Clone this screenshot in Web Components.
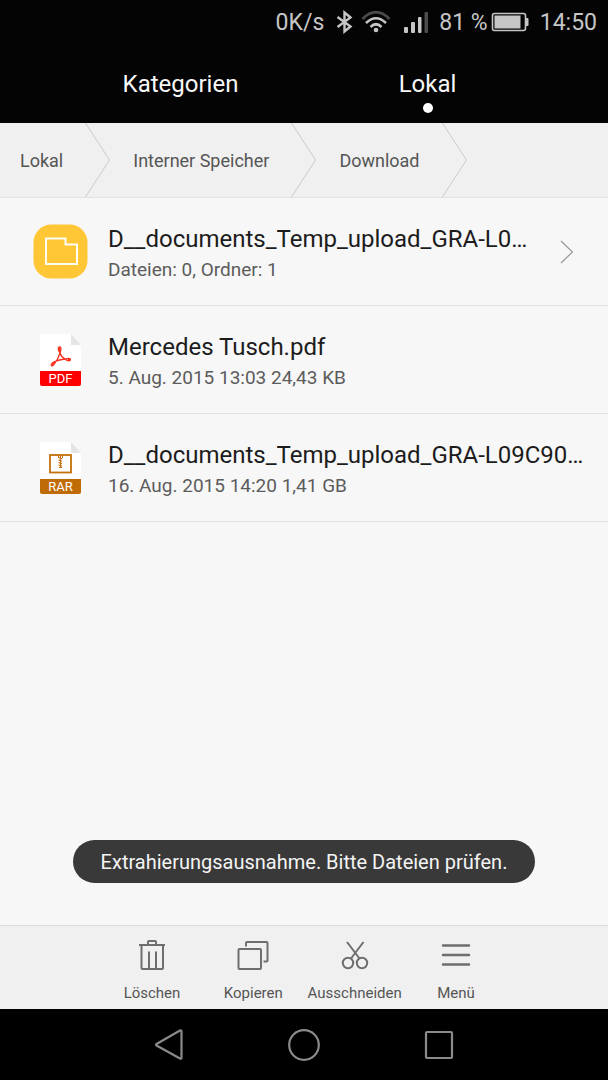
<!DOCTYPE html>
<html lang="de">
<head>
  <meta charset="UTF-8">
  <meta name="viewport" content="width=device-width, initial-scale=1">
  <title>Dateien</title>
  <style>
    body {
      margin: 0;
      background: #f7f7f7;
      font-family: Roboto, "Liberation Sans", sans-serif;
    }
  </style>
</head>
<body>
  <file-manager></file-manager>

  <script>
    class StatusBar extends HTMLElement {
      constructor() {
        super();
        this.attachShadow({ mode: "open" });
      }

      connectedCallback() {
        this.shadowRoot.innerHTML = `
          <style>
            :host {
              display: flex;
              justify-content: flex-end;
              align-items: center;
              height: 44px;
              padding-right: 11px;
              background: #040404;
              color: #c6c6c6;
              font-size: 23px;
            }

            svg {
              display: block;
              flex: none;
            }

            .bluetooth {
              margin: 0 8px 0 12px;
            }

            .signal {
              margin: 0 10px 0 12px;
            }

            .battery {
              margin: 0 10px 0 3px;
            }
          </style>
          <span>0K/s</span>
          <svg class="bluetooth" width="17" height="24" viewBox="0 0 17 24" fill="none" stroke="#c6c6c6" stroke-width="2.400">
            <path d="M1.500 7 L14.500 16.500 L8.500 21.500 V2.500 L14.500 7.500 L1.500 17"/>
          </svg>
          <svg width="30" height="24" viewBox="0 0 30 24" fill="none" stroke="#c6c6c6" stroke-width="2.600">
            <path d="M1.500 9 Q15 -4.500 28.500 9" stroke="#4c4c4c"/>
            <path d="M5 13 Q15 3.500 25 13"/>
            <path d="M9.500 17 Q15 11.500 20.500 17"/>
            <circle cx="15" cy="20" r="2.300" fill="#c6c6c6" stroke="none"/>
          </svg>
          <svg class="signal" width="26" height="24" viewBox="0 0 26 24" fill="#c6c6c6">
            <rect x="1" y="17" width="4" height="6" rx="1"/>
            <rect x="8" y="12" width="4" height="11" rx="1"/>
            <rect x="15" y="7" width="3.500" height="16" rx="1"/>
            <rect x="21.500" y="2" width="3.500" height="21" rx="1" fill="#4c4c4c"/>
          </svg>
          <span>81 %</span>
          <svg class="battery" width="39" height="20" viewBox="0 0 39 20">
            <rect x="1.500" y="1.500" width="33" height="17" rx="2" fill="none" stroke="#c6c6c6" stroke-width="1.600"/>
            <rect x="3.500" y="3.500" width="26" height="13" fill="#c6c6c6"/>
            <path d="M35 6 h1.500 q1 0 1 1 v6 q0 1 -1 1 H35 z" fill="#c6c6c6"/>
          </svg>
          <time>14:50</time>
        `;
      }
    }

    class TabBar extends HTMLElement {
      constructor() {
        super();
        this.attachShadow({ mode: "open" });
      }

      connectedCallback() {
        this.shadowRoot.innerHTML = `
          <style>
            :host {
              display: block;
              background: #040404;
            }

            nav {
              display: grid;
              grid-template-columns: 1fr 1fr;
              padding: 0 57px;
              height: 79px;
            }
          </style>
          <nav><slot></slot></nav>
        `;
      }
    }

    class TabItem extends HTMLElement {
      constructor() {
        super();
        this.attachShadow({ mode: "open" });
      }

      connectedCallback() {
        this.shadowRoot.innerHTML = `
          <style>
            :host {
              display: block;
            }

            button {
              display: flex;
              flex-direction: column;
              align-items: center;
              gap: 5px;
              width: 100%;
              height: 100%;
              padding: 26px 0 0;
              border: 0;
              background: none;
              color: #f8f8f8;
              font: inherit;
              font-size: 24px;
              line-height: 28px;
            }

            :host([active]) button::after {
              content: "";
              width: 10px;
              height: 10px;
              border-radius: 50%;
              background: #ffffff;
            }
          </style>
          <button type="button"><slot></slot></button>
        `;
      }
    }

    class BreadCrumbs extends HTMLElement {
      constructor() {
        super();
        this.attachShadow({ mode: "open" });
      }

      connectedCallback() {
        this.shadowRoot.innerHTML = `
          <style>
            :host {
              display: block;
              background: #f0f0f0;
              border-bottom: 1px solid #e2e2e2;
            }

            nav {
              display: flex;
              height: 74px;
            }
          </style>
          <nav aria-label="Pfad"><slot></slot></nav>
        `;
      }
    }

    class BreadCrumb extends HTMLElement {
      constructor() {
        super();
        this.attachShadow({ mode: "open" });
      }

      connectedCallback() {
        this.shadowRoot.innerHTML = `
          <style>
            :host {
              display: flex;
              align-items: center;
              gap: 22px;
              padding-left: 22px;
            }

            :host(:first-child) {
              padding-left: 20px;
            }

            a {
              color: #555555;
              font-size: 18px;
              text-decoration: none;
              white-space: nowrap;
            }

            svg {
              display: block;
            }
          </style>
          <a href="#"><slot></slot></a>
          <svg width="26" height="74" viewBox="0 0 26 74" fill="none" stroke="#cacaca">
            <path d="M0.500 0 L24.500 37 L0.500 74"/>
          </svg>
        `;
      }
    }

    class FileRow extends HTMLElement {
      constructor() {
        super();
        this.attachShadow({ mode: "open" });
      }

      connectedCallback() {
        const arrow = this.hasAttribute("folder")
          ? `<svg class="arrow" width="14" height="24" viewBox="0 0 14 24" fill="none" stroke="#999999" stroke-width="1.200">
              <path d="M1 1 L12.500 12 L1 23"/>
            </svg>`
          : "";

        this.shadowRoot.innerHTML = `
          <style>
            :host {
              display: block;
              border-bottom: 1px solid #e2e2e2;
            }

            a {
              display: flex;
              align-items: center;
              min-height: 107px;
              padding: 0 20px 0 33px;
              color: inherit;
              text-decoration: none;
            }

            .icon {
              display: flex;
              justify-content: center;
              flex: none;
              width: 55px;
            }

            .text {
              flex: 1;
              min-width: 0;
              margin-left: 20px;
              padding-top: 2px;
            }

            .name,
            .info {
              overflow: hidden;
              text-overflow: ellipsis;
              white-space: nowrap;
            }

            .name {
              color: #1c1c1c;
              font-size: 24px;
              line-height: 34px;
            }

            .info {
              color: #5c5c5c;
              font-size: 19px;
              line-height: 28px;
            }

            .arrow {
              flex: none;
              margin: 0 14px 0 20px;
            }
          </style>
          <a href="#">
            <div class="icon"><slot name="icon"></slot></div>
            <div class="text">
              <div class="name"><slot name="name"></slot></div>
              <div class="info"><slot></slot></div>
            </div>
            ${arrow}
          </a>
        `;
      }
    }

    class FolderIcon extends HTMLElement {
      constructor() {
        super();
        this.attachShadow({ mode: "open" });
      }

      connectedCallback() {
        this.shadowRoot.innerHTML = `
          <style>
            :host {
              display: block;
            }

            svg {
              display: block;
            }
          </style>
          <svg width="55" height="55" viewBox="0 0 55 55">
            <rect x="0.500" y="0.500" width="54" height="54" rx="18" fill="#ffc636"/>
            <path d="M13 14.500 H32.500 V20.500 H44 V40 H13 Z" fill="none" stroke="#fffdf5" stroke-width="2"/>
          </svg>
        `;
      }
    }

    // Sheet of paper with a folded corner and a coloured type label
    class FileIcon extends HTMLElement {
      constructor() {
        super();
        this.attachShadow({ mode: "open" });
      }

      glyph(type) {
        if (type === "PDF") {
          return `
            <g fill="none" stroke="#f8301c" stroke-width="1.300" stroke-linejoin="round">
              <path d="M20 19 C17.500 15 18 13 19.700 13 C21.500 13 21 16 20 19 C19 23 16 28 13.500 31 C12 32.500 10.500 31.500 11.500 30 C13 28 19 25.500 25 25 C28 24 30.500 24 30.500 25.500 C30.500 27.500 27 27 25 25 C22.500 23.500 20.500 21 20 19 Z"/>
              <path d="M12 30.500 L14.500 29 M28 25.500 H30 M19.700 14 V17"/>
            </g>`;
        }
        return `
          <rect x="10" y="13" width="21" height="17.500" fill="none" stroke="#c4700c" stroke-width="1.800"/>
          <path d="M18.500 13 V16 M22.500 13 V16" fill="none" stroke="#c4700c"/>
          <path d="M18.500 15.500 L22 16.500 M18.500 18 L22 19 M18.500 20.500 L22 21.500 M18.500 23 L22 24 M19 25.500 H22 M20.500 14 V26" stroke="#c4700c" stroke-width="1.200"/>`;
      }

      connectedCallback() {
        const type = this.getAttribute("type");

        this.shadowRoot.innerHTML = `
          <style>
            :host {
              display: block;
              width: 41px;
            }

            svg {
              display: block;
            }

            .label {
              border-radius: 0 0 2px 2px;
              background: ${type === "PDF" ? "#ff0000" : "#bf6c08"};
              color: #ffffff;
              font-size: 13px;
              line-height: 15px;
              text-align: center;
            }
          </style>
          <svg width="41" height="37" viewBox="0 0 41 37">
            <path d="M1 0 H31 L41 11 V37 H0 V1 Z" fill="#ffffff"/>
            <path d="M31 0 L41 11 H31 Z" fill="#e5e5e5"/>
            ${this.glyph(type)}
          </svg>
          <div class="label">${type}</div>
        `;
      }
    }

    class ToastMessage extends HTMLElement {
      constructor() {
        super();
        this.attachShadow({ mode: "open" });
      }

      connectedCallback() {
        this.shadowRoot.innerHTML = `
          <style>
            :host {
              display: block;
              padding: 10px 28px 9px;
              border-radius: 22px;
              background: #393939;
              color: #f4f4f4;
              font-size: 20px;
              line-height: 24px;
            }
          </style>
          <div role="status"><slot></slot></div>
        `;
      }
    }

    class ActionButton extends HTMLElement {
      constructor() {
        super();
        this.attachShadow({ mode: "open" });
      }

      connectedCallback() {
        this.shadowRoot.innerHTML = `
          <style>
            :host {
              display: block;
            }

            button {
              display: flex;
              flex-direction: column;
              align-items: center;
              gap: 12px;
              width: 100%;
              padding: 13px 0 6px;
              border: 0;
              background: none;
              color: #555555;
              font: inherit;
              font-size: 15px;
              line-height: 20px;
              white-space: nowrap;
            }

            ::slotted(svg) {
              display: block;
              width: 32px;
              height: 32px;
              fill: none;
              stroke: #6e6e6e;
              stroke-width: 2;
              stroke-linejoin: round;
            }
          </style>
          <button type="button">
            <slot name="icon"></slot>
            <span><slot></slot></span>
          </button>
        `;
      }
    }

    class ActionBar extends HTMLElement {
      constructor() {
        super();
        this.attachShadow({ mode: "open" });
      }

      connectedCallback() {
        this.shadowRoot.innerHTML = `
          <style>
            :host {
              display: grid;
              grid-template-columns: 1fr repeat(4, minmax(0, 1fr)) 1fr;
              border-top: 1px solid #dcdcdc;
              background: #f0f0f0;
            }

            ::slotted(:first-child) {
              grid-column-start: 2;
            }
          </style>
          <slot></slot>
        `;
      }
    }

    class SystemNav extends HTMLElement {
      constructor() {
        super();
        this.attachShadow({ mode: "open" });
      }

      connectedCallback() {
        this.shadowRoot.innerHTML = `
          <style>
            :host {
              display: grid;
              grid-template-columns: repeat(3, 22.2%);
              justify-content: center;
              height: 71px;
              background: #000000;
            }

            button {
              display: flex;
              justify-content: center;
              align-items: center;
              padding: 0;
              border: 0;
              background: none;
            }

            svg {
              fill: none;
              stroke: #8a8a8a;
              stroke-width: 2.2;
              stroke-linejoin: round;
            }
          </style>
          <button type="button" aria-label="Zurück">
            <svg width="34" height="34" viewBox="0 0 34 34"><path d="M4.500 16 L28 2.500 Q29.500 2 29.500 3.500 V29.500 Q29.500 31 28 30.500 L4.500 17.500 Q3.500 16.700 4.500 16 Z"/></svg>
          </button>
          <button type="button" aria-label="Startseite">
            <svg width="34" height="34" viewBox="0 0 34 34"><circle cx="17" cy="17" r="14.800"/></svg>
          </button>
          <button type="button" aria-label="Letzte Apps">
            <svg width="34" height="34" viewBox="0 0 34 34"><rect x="4" y="4" width="26" height="26" rx="1"/></svg>
          </button>
        `;
      }
    }

    class FileManager extends HTMLElement {
      constructor() {
        super();
        this.attachShadow({ mode: "open" });
      }

      connectedCallback() {
        this.shadowRoot.innerHTML = `
          <style>
            :host {
              display: flex;
              flex-direction: column;
              min-height: 100vh;
            }

            main {
              flex: 1;
              display: flex;
              flex-direction: column;
              justify-content: space-between;
            }

            .toast {
              display: flex;
              justify-content: center;
              padding: 20px 20px 42px;
            }
          </style>
          <status-bar></status-bar>
          <tab-bar>
            <tab-item>Kategorien</tab-item>
            <tab-item active>Lokal</tab-item>
          </tab-bar>
          <bread-crumbs>
            <bread-crumb>Lokal</bread-crumb>
            <bread-crumb>Interner Speicher</bread-crumb>
            <bread-crumb>Download</bread-crumb>
          </bread-crumbs>
          <main>
            <div>
              <file-row folder>
                <folder-icon slot="icon"></folder-icon>
                <span slot="name">D__documents_Temp_upload_GRA-L0…</span>
                Dateien: 0, Ordner: 1
              </file-row>
              <file-row>
                <file-icon slot="icon" type="PDF"></file-icon>
                <span slot="name">Mercedes Tusch.pdf</span>
                5. Aug. 2015 13:03 24,43 KB
              </file-row>
              <file-row>
                <file-icon slot="icon" type="RAR"></file-icon>
                <span slot="name">D__documents_Temp_upload_GRA-L09C90…</span>
                16. Aug. 2015 14:20 1,41 GB
              </file-row>
            </div>
            <div class="toast">
              <toast-message>Extrahierungsausnahme. Bitte Dateien prüfen.</toast-message>
            </div>
          </main>
          <action-bar>
            <action-button>
              <svg slot="icon" viewBox="0 0 32 32">
                <path d="M3 6 H29 M12 6 V3 Q12 2 13 2 H19 Q20 2 20 3 V6 M5.500 6 V29 Q5.500 30 6.500 30 H26 Q27 30 27 29 V6 M13 12.500 V29 M20 12.500 V29"/>
              </svg>
              Löschen
            </action-button>
            <action-button>
              <svg slot="icon" viewBox="0 0 32 32">
                <rect x="1.500" y="10" width="22.500" height="20" rx="1"/>
                <path d="M9 7.500 V4 Q9 3 10 3 H29.500 Q30.500 3 30.500 4 V21.500 Q30.500 22.500 29.500 22.500 H26.500"/>
              </svg>
              Kopieren
            </action-button>
            <action-button>
              <svg slot="icon" viewBox="0 0 32 32">
                <path d="M8 3 L20.500 19.500 M24.500 3 L12 19.500"/>
                <circle cx="9" cy="24" r="5.200"/>
                <circle cx="23" cy="24" r="5.200"/>
              </svg>
              Ausschneiden
            </action-button>
            <action-button>
              <svg slot="icon" viewBox="0 0 32 32">
                <path d="M3 6.500 H29 M3 16 H29 M3 25.500 H29" stroke-width="2.500" stroke-linecap="round"/>
              </svg>
              Menü
            </action-button>
          </action-bar>
          <system-nav></system-nav>
        `;
      }
    }

    customElements.define("status-bar", StatusBar);
    customElements.define("tab-bar", TabBar);
    customElements.define("tab-item", TabItem);
    customElements.define("bread-crumbs", BreadCrumbs);
    customElements.define("bread-crumb", BreadCrumb);
    customElements.define("file-row", FileRow);
    customElements.define("folder-icon", FolderIcon);
    customElements.define("file-icon", FileIcon);
    customElements.define("toast-message", ToastMessage);
    customElements.define("action-button", ActionButton);
    customElements.define("action-bar", ActionBar);
    customElements.define("system-nav", SystemNav);
    customElements.define("file-manager", FileManager);
  </script>
</body>
</html>
